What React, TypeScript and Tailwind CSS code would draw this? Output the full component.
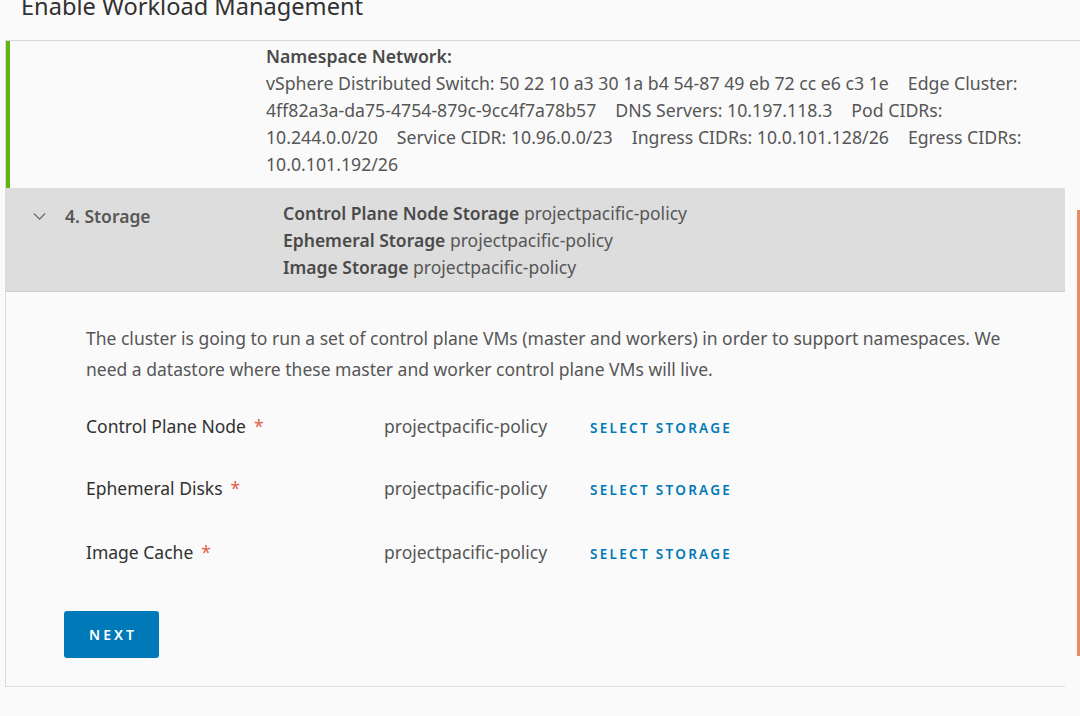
import { ChevronDown } from "lucide-react";

const networkLines = [
  [
    "vSphere Distributed Switch: 50 22 10 a3 30 1a b4 54-87 49 eb 72 cc e6 c3 1e",
    "Edge Cluster:",
  ],
  ["4ff82a3a-da75-4754-879c-9cc4f7a78b57", "DNS Servers: 10.197.118.3", "Pod CIDRs:"],
  ["10.244.0.0/20", "Service CIDR: 10.96.0.0/23", "Ingress CIDRs: 10.0.101.128/26", "Egress CIDRs:"],
  ["10.0.101.192/26"],
];

const storageSummary = [
  { label: "Control Plane Node Storage", value: "projectpacific-policy" },
  { label: "Ephemeral Storage", value: "projectpacific-policy" },
  { label: "Image Storage", value: "projectpacific-policy" },
];

const storageRows = [
  { label: "Control Plane Node", value: "projectpacific-policy", h: "h-[62px]" },
  { label: "Ephemeral Disks", value: "projectpacific-policy", h: "h-[64px]" },
  { label: "Image Cache", value: "projectpacific-policy", h: "h-[62px]" },
];

const App = () => {
  return (
    <div
      className="w-[1080px] h-[716px] overflow-hidden bg-[#fafafa] text-[#565656] relative"
      style={{ fontFamily: '"Noto Sans", "Open Sans", sans-serif' }}
    >
      <header className="h-[41px] ml-[5px] border-b border-[#d7d7d7] overflow-hidden">
        <h1 className="pl-[16px] -mt-[9px] text-[23.6px] leading-[30px] text-[#313131] font-normal">
          Enable Workload Management
        </h1>
      </header>

      <div className="w-[1060px] ml-[5px] border-l border-[#dcdcdc]">
        {/* completed network step */}
        <section className="border-l-[4px] border-[#60b515] pl-[256px] pt-[2px] pb-[10px] text-[17.7px] leading-[27px]">
          <div className="font-semibold text-[#4a4a4a]">Namespace Network:</div>
          {networkLines.map((line, i) => (
            <div key={i} className="whitespace-nowrap flex gap-[19px]">
              {line.map((item, j) => (
                <span key={j}>{item}</span>
              ))}
            </div>
          ))}
        </section>

        {/* storage step header */}
        <section className="h-[104px] bg-[#dddddd] border-b border-[#cccccc] flex pt-[12px] text-[17.5px] leading-[27px]">
          <div className="w-[277px] flex items-center self-start h-[32px] pl-[23px]">
            <ChevronDown className="w-[21px] h-[21px] text-[#666]" strokeWidth={1.6} />
            <span className="ml-[15px] font-semibold text-[#575757]">4. Storage</span>
          </div>
          <div>
            {storageSummary.map((s) => (
              <div key={s.label} className="whitespace-nowrap">
                <span className="font-semibold text-[#4a4a4a]">{s.label}</span> {s.value}
              </div>
            ))}
          </div>
        </section>

        {/* storage step body */}
        <section className="pl-[80px] pt-[31px] pb-[28px] border-b border-[#dddddd] text-[17.5px]">
          <p className="leading-[31px] whitespace-nowrap">
            The cluster is going to run a set of control plane VMs (master and workers) in order to support namespaces. We
            <br />
            need a datastore where these master and worker control plane VMs will live.
          </p>
          <div className="mt-[29px]">
            {storageRows.map((r) => (
              <div key={r.label} className={`flex items-start leading-[24px] ${r.h}`}>
                <div className="w-[298px] text-[#313131]">
                  {r.label}
                  <span className="ml-[8px] text-[#e0624a]">*</span>
                </div>
                <div className="w-[206px]">{r.value}</div>
                <button className="mt-[2px] leading-[24px] text-[13.5px] font-semibold tracking-[2.3px] text-[#0079b8]">
                  SELECT STORAGE
                </button>
              </div>
            ))}
          </div>
          <button className="-ml-[22px] mt-[9px] w-[95px] h-[47px] rounded-[3px] bg-[#0079b8] text-white text-[14px] font-semibold tracking-[3px] pl-[3px]">
            NEXT
          </button>
        </section>
      </div>

      {/* scroll indicator */}
      <div className="absolute left-[1077px] top-[210px] w-[3px] h-[446px] bg-[#ea8a62]" />
    </div>
  );
};

export default App;
